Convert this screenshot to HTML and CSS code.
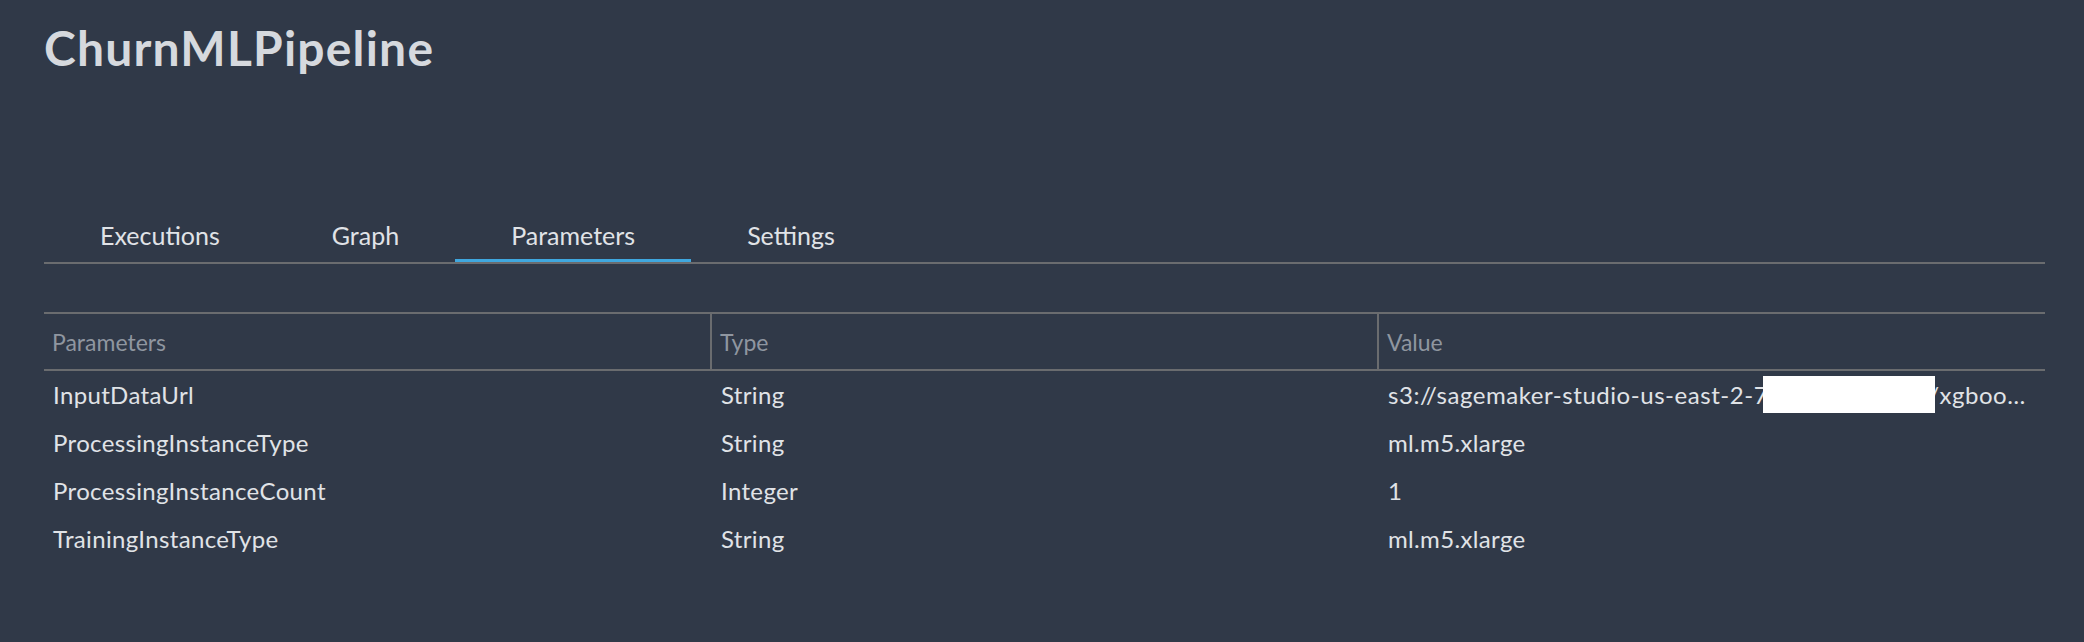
FILE: index.html
```html
<!DOCTYPE html>
<html lang="en">
<head>
<meta charset="utf-8">
<title>ChurnMLPipeline</title>
<link rel="stylesheet" href="styles.css">
</head>
<body>
<main class="page">
  <h1 class="title">ChurnMLPipeline</h1>
  <nav class="tabs">
    <div class="tab">Executions</div>
    <div class="tab">Graph</div>
    <div class="tab active">Parameters</div>
    <div class="tab">Settings</div>
  </nav>
  <table class="params">
    <thead>
      <tr>
        <th>Parameters</th>
        <th>Type</th>
        <th>Value</th>
      </tr>
    </thead>
    <tbody>
      <tr>
        <td>InputDataUrl</td>
        <td>String</td>
        <td class="value url">s3://sagemaker-studio-us-east-2-7<span class="redact"></span>/xgboost-churn/input/churn.csv</td>
      </tr>
      <tr>
        <td>ProcessingInstanceType</td>
        <td>String</td>
        <td class="value">ml.m5.xlarge</td>
      </tr>
      <tr>
        <td>ProcessingInstanceCount</td>
        <td>Integer</td>
        <td class="value">1</td>
      </tr>
      <tr>
        <td>TrainingInstanceType</td>
        <td>String</td>
        <td class="value">ml.m5.xlarge</td>
      </tr>
    </tbody>
  </table>
</main>
</body>
</html>
```
FILE: styles.css
```css
html, body {
  margin: 0;
  padding: 0;
  background: #303948;
}

body {
  font-family: Lato, "Open Sans", "Noto Sans", sans-serif;
  color: #dfe2e6;
  height: 642px;
  overflow: hidden;
}

.page {
  padding: 24px 39px 0 44px;
}

.title {
  margin: 0;
  font-size: 48px;
  line-height: 48px;
  letter-spacing: 1.2px;
  font-weight: 700;
  color: #d6d9de;
}

.tabs {
  display: flex;
  margin-top: 151px;
  border-bottom: 2px solid #6a6c6f;
}

.tab {
  padding: 0 56px 14px;
  font-size: 25px;
  line-height: 25px;
  color: #e0e3e7;
}

.tab.active {
  box-shadow: inset 0 -3px 0 #3fa7de;
}

.params {
  margin-top: 48px;
  width: 100%;
  table-layout: fixed;
  border-collapse: collapse;
}

.params th {
  height: 55px;
  padding: 0 8px;
  text-align: left;
  font-weight: 400;
  font-size: 23px;
  color: #8f96a0;
  border-top: 2px solid #6a6c6f;
  border-bottom: 2px solid #6a6c6f;
}

.params th + th {
  border-left: 2px solid #6a6c6f;
}

.params td {
  height: 48px;
  padding: 0 14px 0 9px;
  font-size: 24px;
  line-height: 48px;
  letter-spacing: 0.35px;
  white-space: nowrap;
  overflow: hidden;
  text-overflow: ellipsis;
  color: #e0e3e7;
}

.params td + td {
  padding-left: 10px;
}

.params td.url {
  letter-spacing: 0.55px;
}

.redact {
  position: relative;
  z-index: 1;
  display: inline-block;
  width: 172px;
  height: 37px;
  margin: 0 -7px 0 -5px;
  vertical-align: -9px;
  background: #ffffff;
}
```
